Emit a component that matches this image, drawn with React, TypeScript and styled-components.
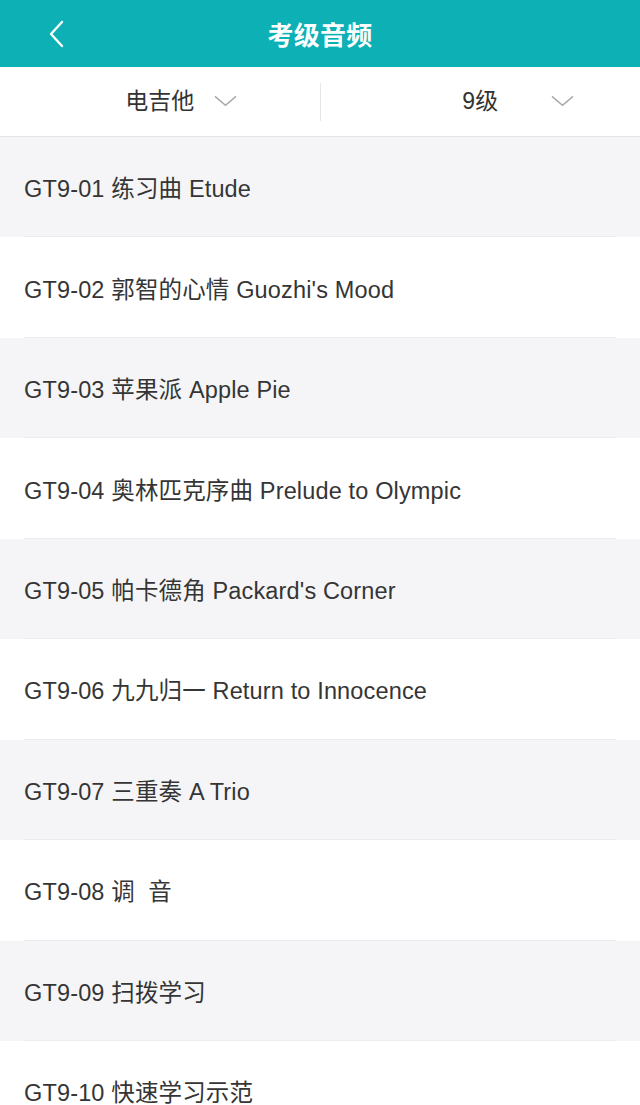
import React from "react";
import styled, { createGlobalStyle } from "styled-components";

const GlobalStyle = createGlobalStyle`
  html, body {
    margin: 0;
    padding: 0;
    background: #ffffff;
  }
  body {
    font-family: "Liberation Sans", "Noto Sans CJK SC", sans-serif;
    -webkit-font-smoothing: antialiased;
  }
`;

const Page = styled.div`
  width: 640px;
  height: 1105px;
  overflow: hidden;
  background: #ffffff;
`;

const NavBar = styled.header`
  height: 67px;
  background: #0cb0b5;
  display: grid;
  grid-template-columns: 100px 1fr 100px;
  align-items: center;
  color: #ffffff;
`;

const BackButton = styled.div`
  padding-left: 48px;
  display: flex;
  align-items: center;
  height: 100%;
`;

const Title = styled.h1`
  margin: 0;
  text-align: center;
  font-family: "Noto Sans CJK SC", sans-serif;
  font-size: 26px;
  font-weight: 700;
  letter-spacing: 0.3px;
`;

const FilterBar = styled.div`
  height: 69px;
  display: grid;
  grid-template-columns: 1fr 1px 1fr;
  align-items: center;
  border-bottom: 1px solid #e3e3e6;
  box-shadow: 0 1px 2px rgba(0, 0, 0, 0.05);
`;

const Divider = styled.div`
  height: 38px;
  background: #e6e6e6;
`;

const FilterCell = styled.div`
  display: flex;
  justify-content: center;
  align-items: center;
`;

const FilterLabel = styled.span<{ $arrowGap: number }>`
  position: relative;
  font-family: "Liberation Sans", "Noto Sans CJK SC", sans-serif;
  font-size: 23px;
  color: #333333;
  line-height: 1;

  svg {
    position: absolute;
    top: 50%;
    left: calc(100% + ${(p) => p.$arrowGap}px);
    transform: translateY(-60%);
  }
`;

const List = styled.ul`
  list-style: none;
  margin: 0;
  padding: 0;
`;

const Row = styled.li<{ $shaded: boolean }>`
  position: relative;
  height: 100.45px;
  display: flex;
  align-items: center;
  padding-left: 24px;
  background: ${(p) => (p.$shaded ? "#f5f5f7" : "#ffffff")};
  font-family: "Liberation Sans", "Noto Sans CJK SC", sans-serif;
  font-size: 23.5px;
  letter-spacing: 0.15px;
  color: #353535;
  white-space: pre;

  &::after {
    content: "";
    position: absolute;
    left: 24px;
    right: 24px;
    bottom: 0;
    height: 1px;
    background: #ececef;
  }
`;

const Chevron = ({ w = 23, h = 11 }: { w?: number; h?: number }) => (
  <svg width={w} height={h} viewBox="0 0 23 11" fill="none">
    <path d="M1 1 L11.5 10 L22 1" stroke="#a8a8ab" strokeWidth="1.4" />
  </svg>
);

const BackIcon = () => (
  <svg width="16" height="28" viewBox="0 0 16 28" fill="none">
    <path d="M14 2 L3 14 L14 26" stroke="#ffffff" strokeWidth="2.4" strokeLinecap="round" strokeLinejoin="round" />
  </svg>
);

const tracks = [
  "GT9-01 练习曲 Etude",
  "GT9-02 郭智的心情 Guozhi's Mood",
  "GT9-03 苹果派 Apple Pie",
  "GT9-04 奥林匹克序曲 Prelude to Olympic",
  "GT9-05 帕卡德角 Packard's Corner",
  "GT9-06 九九归一 Return to Innocence",
  "GT9-07 三重奏 A Trio",
  "GT9-08 调  音",
  "GT9-09 扫拨学习",
  "GT9-10 快速学习示范",
];

export default function App() {
  return (
    <Page>
      <GlobalStyle />
      <NavBar>
        <BackButton>
          <BackIcon />
        </BackButton>
        <Title>考级音频</Title>
        <div />
      </NavBar>
      <FilterBar>
        <FilterCell>
          <FilterLabel $arrowGap={20}>
            电吉他
            <Chevron />
          </FilterLabel>
        </FilterCell>
        <Divider />
        <FilterCell>
          <FilterLabel $arrowGap={53}>
            9级
            <Chevron />
          </FilterLabel>
        </FilterCell>
      </FilterBar>
      <List>
        {tracks.map((t, i) => (
          <Row key={t} $shaded={i % 2 === 0}>
            {t}
          </Row>
        ))}
      </List>
    </Page>
  );
}
